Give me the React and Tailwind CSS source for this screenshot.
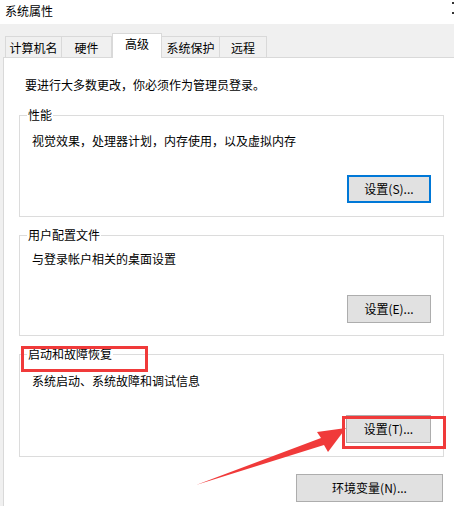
import React from 'react';

const tabs = [
    { label: '计算机名', width: 'w-[57px]' },
    { label: '硬件', width: 'w-[50px]' },
    { label: '高级', width: 'w-[50px]', active: true },
    { label: '系统保护', width: 'w-[58px]' },
    { label: '远程', width: 'w-[47px]' },
];

const WinButton = ({ children, primary, className = '' }) => (
    <button
        className={`h-[28px] bg-[#e1e1e1] text-[12px] leading-[16px] text-black ${
            primary ? 'border-2 border-[#0078d7]' : 'border border-[#adadad]'
        } ${className}`}
    >
        {children}
    </button>
);

const GroupBox = ({ title, text, button, className = '', textClass = 'mt-[10px]', buttonClass = 'mt-[26px]' }) => (
    <fieldset className={`w-[425px] ml-[15px] border border-[#dcdcdc] px-0 ${className}`}>
        <legend className="ml-[7px] px-[1px] text-[12px] leading-[16px]">{title}</legend>
        <p className={`pl-[12px] text-[12px] leading-[16px] ${textClass}`}>{text}</p>
        <div className={`flex justify-end pr-[12px] ${buttonClass}`}>{button}</div>
    </fieldset>
);

export default function App() {
    return (
        <div
            className="relative w-[454px] h-[506px] overflow-hidden bg-[#f0f0f0] text-black flex flex-col"
            style={{ fontFamily: '"Noto Sans CJK SC", "Noto Sans", sans-serif' }}
        >
            {/* title bar */}
            <div className="h-[24px] shrink-0 bg-white pl-[5px] pt-[3px] text-[12px] leading-[16px]">
                系统属性
            </div>
            <div className="absolute right-0 top-[2px] w-[2px] flex flex-col gap-[8px]">
                <span className="w-[2px] h-[2px] bg-[#333]"></span>
                <span className="w-[2px] h-[2px] bg-[#333]"></span>
            </div>

            {/* tabs */}
            <div className="h-[33px] shrink-0 flex items-end pl-[5px]">
                {tabs.map(t => (
                    <div
                        key={t.label}
                        className={
                            t.active
                                ? `${t.width} h-[25px] -mb-[1px] relative z-10 bg-white border border-b-0 border-[#d9d9d9] text-[12px] leading-[16px] pt-[2px] text-center`
                                : `${t.width} h-[21px] bg-[#f0f0f0] border border-b-0 border-l-0 first:border-l border-[#d9d9d9] text-[12px] leading-[16px] pt-[3px] text-center`
                        }
                    >
                        {t.label}
                    </div>
                ))}
            </div>

            {/* panel */}
            <div className="flex-1 ml-[3px] bg-white border-l border-t border-[#d9d9d9]">
                <p className="pl-[21px] pt-[19px] text-[12px] leading-[16px]">
                    要进行大多数更改，你必须作为管理员登录。
                </p>

                <GroupBox
                    className="mt-[14px] pb-[13px]"
                    title="性能"
                    text="视觉效果，处理器计划，内存使用，以及虚拟内存"
                    textClass="mt-[10px]"
                    buttonClass="mt-[26px]"
                    button={<WinButton primary className="w-[84px]">设置(S)...</WinButton>}
                />

                <GroupBox
                    className="mt-[10px] pb-[12px]"
                    title="用户配置文件"
                    text="与登录帐户相关的桌面设置"
                    textClass="mt-[8px]"
                    buttonClass="mt-[28px]"
                    button={<WinButton className="w-[84px]">设置(E)...</WinButton>}
                />

                <GroupBox
                    className="mt-[10px] pb-[13px]"
                    title="启动和故障恢复"
                    text="系统启动、系统故障和调试信息"
                    textClass="mt-[11px]"
                    buttonClass="mt-[26px]"
                    button={<WinButton className="w-[85px]">设置(T)...</WinButton>}
                />

                <div className="w-[425px] ml-[15px] mt-[17px] flex justify-end">
                    <WinButton className="w-[147px] mr-[1px]">环境变量(N)...</WinButton>
                </div>
            </div>

            {/* annotations */}
            <div className="absolute left-[21px] top-[346px] w-[127px] h-[26px] border-[3px] border-[#f03a3a]"></div>
            <div className="absolute left-[342px] top-[416px] w-[104px] h-[33px] border-[3px] border-[#f03a3a]"></div>
            <svg className="absolute left-0 top-0" width="454" height="506" viewBox="0 0 454 506">
                <polygon
                    points="196,485 321,438 317,432 346,428 328,452 324,445"
                    fill="#f03a3a"
                />
            </svg>
        </div>
    );
}
